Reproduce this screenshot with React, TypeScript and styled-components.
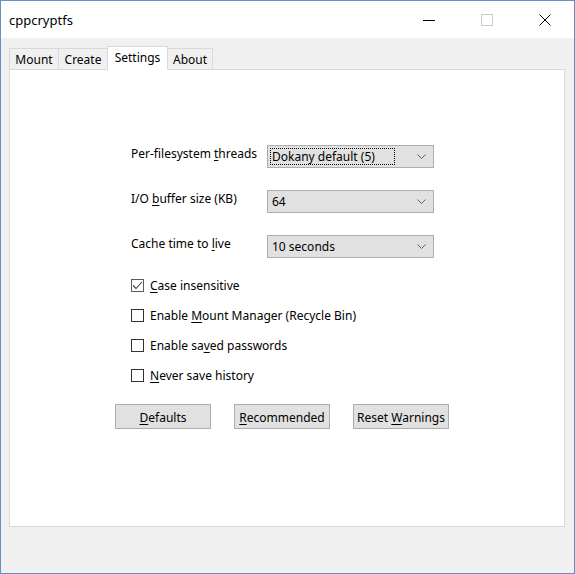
import React from 'react';
import styled, { createGlobalStyle } from 'styled-components';

const UI_FONT = '"Noto Sans", "Open Sans", Arial, sans-serif';

const GlobalStyle = createGlobalStyle`
  html, body {
    margin: 0;
    padding: 0;
    background: #ffffff;
  }
  * {
    box-sizing: border-box;
  }
`;

const Window = styled.div`
  width: 575px;
  height: 574px;
  border: 1px solid #6a8fc8;
  background: #f0f0f0;
  display: flex;
  flex-direction: column;
  font-family: ${UI_FONT};
  font-size: 12px;
  color: #000;
`;

const TitleBar = styled.div`
  height: 37px;
  background: #ffffff;
  display: flex;
  align-items: center;
  flex-shrink: 0;
`;

const Title = styled.div`
  flex: 1;
  padding-left: 8px;
  font-size: 13px;
`;

const CaptionButton = styled.div`
  width: 58px;
  height: 37px;
  display: flex;
  align-items: center;
  justify-content: center;
`;

const Body = styled.div`
  flex: 1;
  padding: 8px 9px 46px 8px;
  display: flex;
  flex-direction: column;
`;

const TabStrip = styled.div`
  display: flex;
  align-items: flex-end;
  height: 24px;
  position: relative;
  z-index: 1;
  margin-bottom: -1px;
`;

const Tab = styled.div<{ $active?: boolean; $w: number }>`
  width: ${(p) => p.$w}px;
  height: ${(p) => (p.$active ? '24px' : '22px')};
  background: ${(p) => (p.$active ? '#ffffff' : '#f0f0f0')};
  border: 1px solid #d9d9d9;
  border-bottom: ${(p) => (p.$active ? 'none' : '1px solid #d9d9d9')};
  margin-left: -1px;
  display: flex;
  justify-content: center;
  align-items: ${(p) => (p.$active ? 'flex-start' : 'center')};
  padding-top: ${(p) => (p.$active ? '2px' : '0')};
  position: relative;
  z-index: ${(p) => (p.$active ? 2 : 1)};
  white-space: nowrap;

  &:first-child {
    margin-left: 0;
  }
`;

const Panel = styled.div`
  flex: 1;
  background: #ffffff;
  border: 1px solid #d9d9d9;
  padding: 75px 0 0 121px;
  display: flex;
  flex-direction: column;
`;

const FieldGrid = styled.div`
  display: grid;
  grid-template-columns: 136px 167px;
  row-gap: 22px;
`;

const FieldLabel = styled.div`
  padding-top: 1px;
  line-height: 16px;
  white-space: nowrap;
`;

const Combo = styled.div`
  height: 23px;
  background: #e1e1e1;
  border: 1px solid #adadad;
  display: flex;
  align-items: center;
  padding: 0 2px;
`;

const ComboText = styled.div<{ $focused?: boolean }>`
  flex: 1;
  height: 17px;
  line-height: 15px;
  padding-left: 1px;
  border: 1px dotted ${(p) => (p.$focused ? '#000' : 'transparent')};
  margin-right: 22px;
`;

const ChevronSlot = styled.span`
  display: flex;
  padding-right: 5px;
`;

const ChecksColumn = styled.div`
  display: flex;
  flex-direction: column;
  gap: 13px;
  margin-top: 19px;
`;

const CheckRow = styled.label`
  display: flex;
  align-items: center;
  height: 17px;
  gap: 6px;
`;

const Box = styled.span<{ $checked?: boolean }>`
  width: 13px;
  height: 13px;
  border: 1px solid ${(p) => (p.$checked ? '#5a5a5a' : '#333333')};
  background: #fff;
  display: flex;
  align-items: center;
  justify-content: center;
`;

const ButtonRow = styled.div`
  display: flex;
  gap: 23px;
  margin-top: 20px;
  margin-left: -16px;
`;

const Button = styled.div`
  width: 96px;
  height: 25px;
  background: #e1e1e1;
  border: 1px solid #adadad;
  display: flex;
  align-items: center;
  justify-content: center;
  padding-top: 1px;
`;

const Key = styled.span`
  text-decoration: underline;
  text-underline-offset: 2px;
`;

const Chevron = () => (
  <svg width="9" height="5" viewBox="0 0 9 5">
    <path d="M0.5 0.5 L4.5 4.5 L8.5 0.5" fill="none" stroke="#606060" strokeWidth="1" />
  </svg>
);

const ComboBox = ({ value, focused }: { value: string; focused?: boolean }) => (
  <Combo>
    <ComboText $focused={focused}>{value}</ComboText>
    <ChevronSlot>
      <Chevron />
    </ChevronSlot>
  </Combo>
);

const CheckBox = ({ checked, children }: { checked?: boolean; children: React.ReactNode }) => (
  <CheckRow>
    <Box $checked={checked}>
      {checked && (
        <svg width="11" height="11" viewBox="0 0 11 11">
          <path d="M1 5.5 L4 8.5 L10 2" fill="none" stroke="#444" strokeWidth="1.1" />
        </svg>
      )}
    </Box>
    <span>{children}</span>
  </CheckRow>
);

const App = () => (
  <>
    <GlobalStyle />
    <Window>
      <TitleBar>
        <Title>cppcryptfs</Title>
        <CaptionButton>
          <svg width="12" height="12" viewBox="0 0 12 12">
            <path d="M0 6.5 H12" stroke="#000" strokeWidth="1" />
          </svg>
        </CaptionButton>
        <CaptionButton>
          <svg width="12" height="12" viewBox="0 0 12 12">
            <rect x="0.5" y="0.5" width="11" height="11" fill="none" stroke="#cccccc" />
          </svg>
        </CaptionButton>
        <CaptionButton>
          <svg width="12" height="12" viewBox="0 0 12 12">
            <path d="M0.5 0.5 L11.5 11.5 M11.5 0.5 L0.5 11.5" stroke="#000" strokeWidth="1" />
          </svg>
        </CaptionButton>
      </TitleBar>
      <Body>
        <TabStrip>
          <Tab $w={50}>Mount</Tab>
          <Tab $w={50}>Create</Tab>
          <Tab $w={61} $active>
            Settings
          </Tab>
          <Tab $w={46}>About</Tab>
        </TabStrip>
        <Panel>
          <FieldGrid>
            <FieldLabel>
              Per-filesystem <Key>t</Key>hreads
            </FieldLabel>
            <ComboBox value="Dokany default (5)" focused />
            <FieldLabel>
              I/O <Key>b</Key>uffer size (KB)
            </FieldLabel>
            <ComboBox value="64" />
            <FieldLabel>
              Cache time to <Key>l</Key>ive
            </FieldLabel>
            <ComboBox value="10 seconds" />
          </FieldGrid>
          <ChecksColumn>
            <CheckBox checked>
              <Key>C</Key>ase insensitive
            </CheckBox>
            <CheckBox>
              Enable <Key>M</Key>ount Manager (Recycle Bin)
            </CheckBox>
            <CheckBox>
              Enable sa<Key>v</Key>ed passwords
            </CheckBox>
            <CheckBox>
              <Key>N</Key>ever save history
            </CheckBox>
          </ChecksColumn>
          <ButtonRow>
            <Button>
              <span>
                <Key>D</Key>efaults
              </span>
            </Button>
            <Button>
              <span>
                <Key>R</Key>ecommended
              </span>
            </Button>
            <Button>
              <span>
                Reset <Key>W</Key>arnings
              </span>
            </Button>
          </ButtonRow>
        </Panel>
      </Body>
    </Window>
  </>
);

export default App;
